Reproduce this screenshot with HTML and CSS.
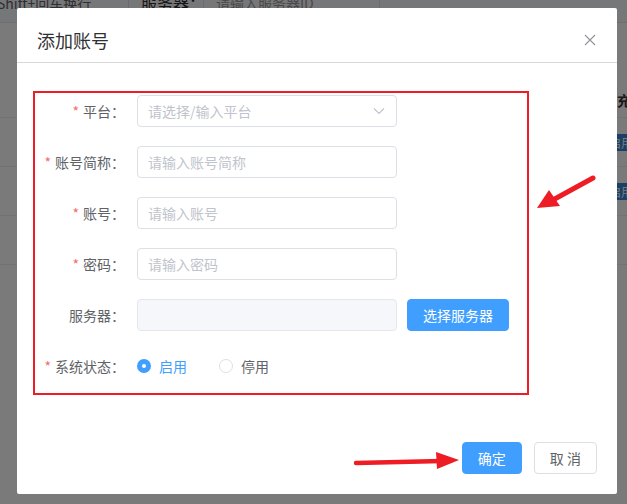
FILE: index.html
```html
<!DOCTYPE html>
<html lang="zh-CN">
<head>
    <meta charset="UTF-8">
    <meta name="viewport" content="width=device-width, initial-scale=1.0">
    <title>添加账号</title>
    <link rel="stylesheet" href="styles.css">
</head>
<body>
    <div class="page">
        <div class="toolbar">
            <span class="toolbar-tip">Shift+回车换行</span>
            <span class="toolbar-label">服务器：</span>
            <span class="toolbar-input">请输入服务器ID</span>
        </div>
        <div class="table">
            <div class="table-row table-head"><span class="head-cell">充值</span></div>
            <div class="table-row"><span class="tag">启用</span></div>
            <div class="table-row"><span class="tag">启用</span></div>
            <div class="table-row"></div>
            <div class="table-row"></div>
        </div>
    </div>
    <div class="mask"></div>

    <div class="dialog">
        <div class="dialog-header">
            <span class="dialog-title">添加账号</span>
            <button class="dialog-close" type="button">
                <svg width="12" height="12" viewBox="0 0 12 12"><path d="M1 1L11 11M11 1L1 11" stroke="#909399" stroke-width="1.1" fill="none"/></svg>
            </button>
        </div>
        <div class="dialog-body">
            <form class="account-form">
                <div class="form-item is-required">
                    <label class="form-label">平台</label>
                    <div class="select">
                        <input class="input" type="text" placeholder="请选择/输入平台">
                        <svg class="select-arrow" width="12" height="8" viewBox="0 0 12 8"><path d="M1 1.5L6 6.5L11 1.5" stroke="#c0c4cc" stroke-width="1.2" fill="none"/></svg>
                    </div>
                </div>
                <div class="form-item is-required">
                    <label class="form-label">账号简称</label>
                    <input class="input" type="text" placeholder="请输入账号简称">
                </div>
                <div class="form-item is-required">
                    <label class="form-label">账号</label>
                    <input class="input" type="text" placeholder="请输入账号">
                </div>
                <div class="form-item is-required">
                    <label class="form-label">密码</label>
                    <input class="input" type="password" placeholder="请输入密码">
                </div>
                <div class="form-item">
                    <label class="form-label">服务器</label>
                    <input class="input is-disabled" type="text" disabled>
                    <button class="btn btn-primary btn-pick" type="button">选择服务器</button>
                </div>
                <div class="form-item is-required">
                    <label class="form-label">系统状态</label>
                    <span class="radio is-checked"><span class="radio-dot"></span>启用</span>
                    <span class="radio"><span class="radio-dot"></span>停用</span>
                </div>
            </form>
        </div>
        <div class="dialog-footer">
            <button class="btn btn-primary" type="button">确定</button>
            <button class="btn btn-default" type="button">取 消</button>
        </div>
    </div>

    <svg class="arrows" width="627" height="504" viewBox="0 0 627 504">
        <path d="M593 178L551 201" stroke="#ee1c25" stroke-width="5" stroke-linecap="round" fill="none"/>
        <polygon points="537,208 549,190 560,206" fill="#ee1c25"/>
        <path d="M356 463L442 461" stroke="#ee1c25" stroke-width="4.5" stroke-linecap="round" fill="none"/>
        <polygon points="459,460 436,452 437,469" fill="#ee1c25"/>
    </svg>
</body>
</html>
```

FILE: styles.css
```css
* {
    box-sizing: border-box;
}
body {
    margin: 0;
    width: 627px;
    height: 504px;
    overflow: hidden;
    font-family: "Noto Sans CJK SC", "Noto Sans", sans-serif;
    font-size: 14px;
    color: #606266;
    background-color: #fff;
}

/* page behind the dialog */
.page {
    height: 504px;
    overflow: hidden;
}
.toolbar {
    display: flex;
    height: 23px;
    background-color: #f7f8fa;
    border-bottom: 1px solid #e6e6e6;
    line-height: 16px;
    white-space: nowrap;
}
.toolbar > span {
    margin-top: -5px;
}
.toolbar-tip {
    width: 132px;
    margin-left: -3px;
    color: #606266;
    border-right: 1px solid #dcdfe6;
}
.toolbar-label {
    width: 75px;
    padding-left: 12px;
    font-size: 16px;
    color: #303133;
    border-right: 1px solid #dcdfe6;
}
.toolbar-input {
    width: 176px;
    padding-left: 12px;
    color: #999;
    border-right: 1px solid #dcdfe6;
}
.table {
    padding-top: 45px;
}
.table-row {
    display: flex;
    align-items: center;
    height: 49px;
    border-top: 1px solid #ebeef5;
    padding-left: 603px;
    white-space: nowrap;
}
.table-head {
    align-items: flex-start;
    padding-top: 22px;
    padding-left: 617px;
    border-top: none;
    font-weight: bold;
    color: #333;
}
.tag {
    padding: 0 6px;
    height: 17px;
    line-height: 17px;
    font-size: 12px;
    color: #fff;
    background-color: #3a86d8;
}
.mask {
    position: absolute;
    top: 0;
    left: 0;
    width: 627px;
    height: 504px;
    background-color: rgba(0, 0, 0, 0.52);
}

/* dialog */
.dialog {
    position: absolute;
    top: 8px;
    left: 17px;
    width: 600px;
    height: 486px;
    display: flex;
    flex-direction: column;
    background-color: #fff;
    border-radius: 2px;
}
.dialog-header {
    display: flex;
    align-items: center;
    justify-content: space-between;
    padding: 20px 20px 10px;
    border-bottom: 1px solid #d9d9d9;
}
.dialog-title {
    font-size: 18px;
    line-height: 24px;
    color: #303133;
}
.dialog-close {
    display: flex;
    padding: 0;
    margin-right: 1px;
    border: none;
    background: none;
}
.dialog-body {
    padding: 28px 16px 0;
}
.account-form {
    width: 496px;
    margin: 0;
    padding: 2px 0 11px;
    border: 2px solid #ee1c25;
}
.form-item {
    display: flex;
    align-items: center;
    height: 32px;
    margin-bottom: 19px;
}
.form-item:last-child {
    margin-bottom: 0;
}
.form-label {
    width: 102px;
    padding-right: 12px;
    text-align: right;
    line-height: 32px;
    color: #606266;
}
.form-label::after {
    content: "：";
    font-family: "Noto Sans CJK TC", sans-serif;
}
.is-required .form-label::before {
    content: "*";
    margin-right: 4px;
    color: #f56c6c;
}
.input {
    width: 260px;
    height: 32px;
    padding: 0 10px;
    font-family: inherit;
    font-size: 14px;
    color: #606266;
    border: 1px solid #dcdfe6;
    border-radius: 4px;
    outline: none;
    background-color: #fff;
}
.input::placeholder {
    color: #c0c4cc;
}
.input.is-disabled {
    background-color: #f5f7fa;
    border-color: #e4e7ed;
}
.select {
    position: relative;
    display: flex;
}
.select-arrow {
    position: absolute;
    top: 12px;
    right: 12px;
}
.radio {
    display: flex;
    align-items: center;
    margin-right: 32px;
    color: #606266;
}
.radio-dot {
    width: 14px;
    height: 14px;
    margin-right: 8px;
    border: 1px solid #dcdfe6;
    border-radius: 50%;
    background-color: #fff;
}
.radio.is-checked {
    color: #409eff;
}
.radio.is-checked .radio-dot {
    border: 5px solid #409eff;
}

/* buttons */
.btn {
    height: 32px;
    padding: 0 15px;
    font-family: inherit;
    font-size: 14px;
    border-radius: 4px;
    cursor: pointer;
    white-space: pre;
}
.btn-primary {
    color: #fff;
    background-color: #409eff;
    border: 1px solid #409eff;
}
.btn-default {
    color: #606266;
    background-color: #fff;
    border: 1px solid #dcdfe6;
}
.btn-pick {
    margin-left: 10px;
}
.dialog-footer {
    display: flex;
    justify-content: flex-end;
    gap: 12px;
    margin-top: auto;
    padding: 0 20px 20px;
}
.arrows {
    position: absolute;
    top: 0;
    left: 0;
    pointer-events: none;
}
```
